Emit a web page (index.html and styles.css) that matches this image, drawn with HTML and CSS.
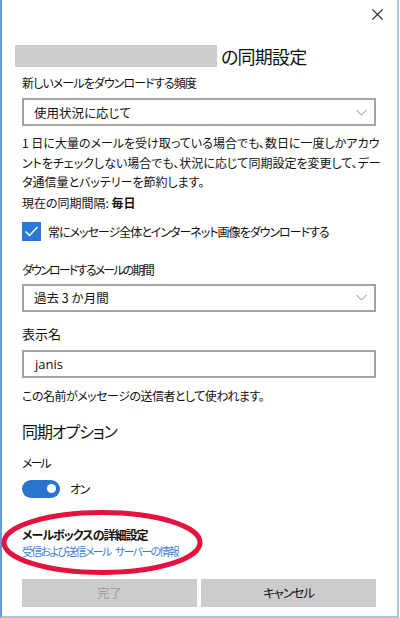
FILE: index.html
```html
<!DOCTYPE html>
<html lang="ja">
<head>
<meta charset="utf-8">
<link rel="stylesheet" href="styles.css">
</head>
<body>
<div class="window">
  <div class="topbar">
    <svg class="close" width="11" height="11" viewBox="0 0 11 11"><path d="M0.5 0.5 L10.5 10.5 M10.5 0.5 L0.5 10.5" stroke="#333" stroke-width="1.2" fill="none"/></svg>
  </div>
  <div class="title"><span class="redact"></span><span class="title-text">の同期設定</span></div>

  <div class="label l1">新しいメールをダウンロードする頻度</div>
  <div class="select s1"><span>使用状況に応じて</span><svg class="chev" width="11" height="7" viewBox="0 0 11 7"><path d="M0.5 1 L5.5 6 L10.5 1" stroke="#8a8a8a" stroke-width="1" fill="none"/></svg></div>

  <div class="para">
    <div class="pl">1 日に大量のメールを受け取っている場合でも、数日に一度しかアカウ</div>
    <div class="pl">ントをチェックしない場合でも、状況に応じて同期設定を変更して、デー</div>
    <div class="pl">タ通信量とバッテリーを節約します。</div>
  </div>
  <div class="label interval">現在の同期間隔: <b>毎日</b></div>

  <div class="check-row">
    <span class="checkbox"><svg width="19" height="19" viewBox="0 0 19 19"><path d="M3.5 9.5 L7.5 13.5 L15.5 5" stroke="#fff" stroke-width="1.5" fill="none"/></svg></span>
    <span class="check-text">常にメッセージ全体とインターネット画像をダウンロードする</span>
  </div>

  <div class="label l2">ダウンロードするメールの期間</div>
  <div class="select s2"><span>過去 3 か月間</span><svg class="chev" width="11" height="7" viewBox="0 0 11 7"><path d="M0.5 1 L5.5 6 L10.5 1" stroke="#8a8a8a" stroke-width="1" fill="none"/></svg></div>

  <div class="label l3">表示名</div>
  <div class="input">janis</div>
  <div class="label helper">この名前がメッセージの送信者として使われます。</div>

  <div class="section">同期オプション</div>
  <div class="label mail">メール</div>
  <div class="toggle-row"><span class="toggle"><span class="knob"></span></span><span class="on">オン</span></div>

  <div class="adv">
    <div class="adv-title">メールボックスの詳細設定</div>
    <div class="adv-link">受信および送信メール<span class="sp"> </span>サーバーの情報</div>
    <svg class="ring" width="210" height="78" viewBox="0 0 210 78"><ellipse cx="102" cy="39.5" rx="98" ry="30" stroke="#e3123e" stroke-width="5" fill="none"/></svg>
  </div>

  <div class="buttons">
    <div class="btn disabled">完了</div>
    <div class="btn cancel">キャンセル</div>
  </div>
</div>
</body>
</html>
```
FILE: styles.css
```css
html, body {
  margin: 0;
  padding: 0;
  background: #fff;
}
body {
  font-family: "Noto Sans CJK JP", "Noto Sans", sans-serif;
  font-feature-settings: "palt";
  color: #111;
  font-size: 12px;
}
.window {
  position: relative;
  width: 399px;
  height: 618px;
  box-sizing: border-box;
  border-left: 2px solid #6b9bd1;
  border-right: 2px solid #a9c5e4;
  border-bottom: 2px solid #a9c5e4;
  padding: 0 21px 0 20px;
  display: flex;
  flex-direction: column;
}
.topbar {
  height: 30px;
  display: flex;
  justify-content: flex-end;
  align-items: center;
  margin-right: -7px;
}
.close {
  display: block;
  margin-top: -2px;
}
.title {
  display: flex;
  align-items: center;
  height: 22px;
  margin-top: 15px;
  margin-left: -7px;
}
.redact {
  width: 202px;
  height: 22px;
  background: #cccccc;
}
.title-text {
  font-size: 18px;
  margin-left: 4px;
  line-height: 22px;
  letter-spacing: -0.8px;
  color: #111;
}
.label {
  line-height: 20px;
  height: 20px;
  white-space: nowrap;
}
.l1 { margin-top: 6px; letter-spacing: -0.9px; }
.select, .input {
  height: 28px;
  box-sizing: border-box;
  border: 2px solid #a3a3a3;
  display: flex;
  align-items: center;
  justify-content: space-between;
  padding: 0 7px 0 10px;
  font-size: 12.5px;
}
.s1 { margin-top: 5px; }
.chev { display: block; }
.para {
  margin-top: 7px;
  line-height: 19.5px;
}
.pl { white-space: nowrap; height: 19.5px; }
.interval { margin-top: 1px; }
.interval b { font-weight: 700; }
.check-row {
  margin-top: 9px;
  height: 19px;
  display: flex;
  align-items: center;
}
.checkbox {
  width: 19px;
  height: 19px;
  background: #2b79d6;
  display: block;
}
.checkbox svg { display: block; }
.check-text {
  margin-left: 7px;
  white-space: nowrap;
  letter-spacing: -1px;
}
.l2 { margin-top: 19px; letter-spacing: -1.8px; }
.s2 { margin-top: 4px; }
.l3 { margin-top: 12px; font-size: 13px; }
.input {
  margin-top: 6px;
  font-family: "Open Sans", "Noto Sans", sans-serif;
  font-size: 13px;
  padding-left: 11px;
}
.helper { margin-top: 8px; letter-spacing: -0.5px; }
.section {
  margin-top: 13px;
  line-height: 24px;
  height: 24px;
  font-size: 16px;
  letter-spacing: -1.1px;
}
.mail { margin-top: 10px; letter-spacing: -2px; }
.toggle-row {
  margin-top: 7px;
  height: 18px;
  display: flex;
  align-items: center;
}
.toggle {
  width: 38px;
  height: 18px;
  border-radius: 9px;
  background: #2a74cf;
  display: flex;
  align-items: center;
  justify-content: flex-end;
  padding-right: 4px;
  box-sizing: border-box;
}
.knob {
  width: 9px;
  height: 9px;
  border-radius: 50%;
  background: #fff;
}
.on { margin-left: 10px; letter-spacing: -1.5px; }
.adv {
  position: relative;
  margin-top: 28px;
}
.adv-title {
  font-weight: 700;
  line-height: 18px;
  height: 18px;
  letter-spacing: -1px;
}
.adv-link {
  color: #3a7ed6;
  font-size: 11px;
  line-height: 15px;
  height: 16px;
  letter-spacing: -1.7px;
  white-space: nowrap;
}
.adv-link .sp {
  letter-spacing: 0;
  margin-right: 2px;
}
.ring {
  position: absolute;
  left: -22px;
  top: -23px;
}
.buttons {
  margin-top: 19px;
  display: grid;
  grid-template-columns: 1fr 1fr;
  gap: 4px;
}
.btn {
  height: 28px;
  background: #cccccc;
  display: flex;
  align-items: center;
  justify-content: center;
  font-size: 12.5px;
  color: #111;
}
.btn.cancel { letter-spacing: -1.2px; }
.btn.disabled { color: #9e9e9e; }
```
